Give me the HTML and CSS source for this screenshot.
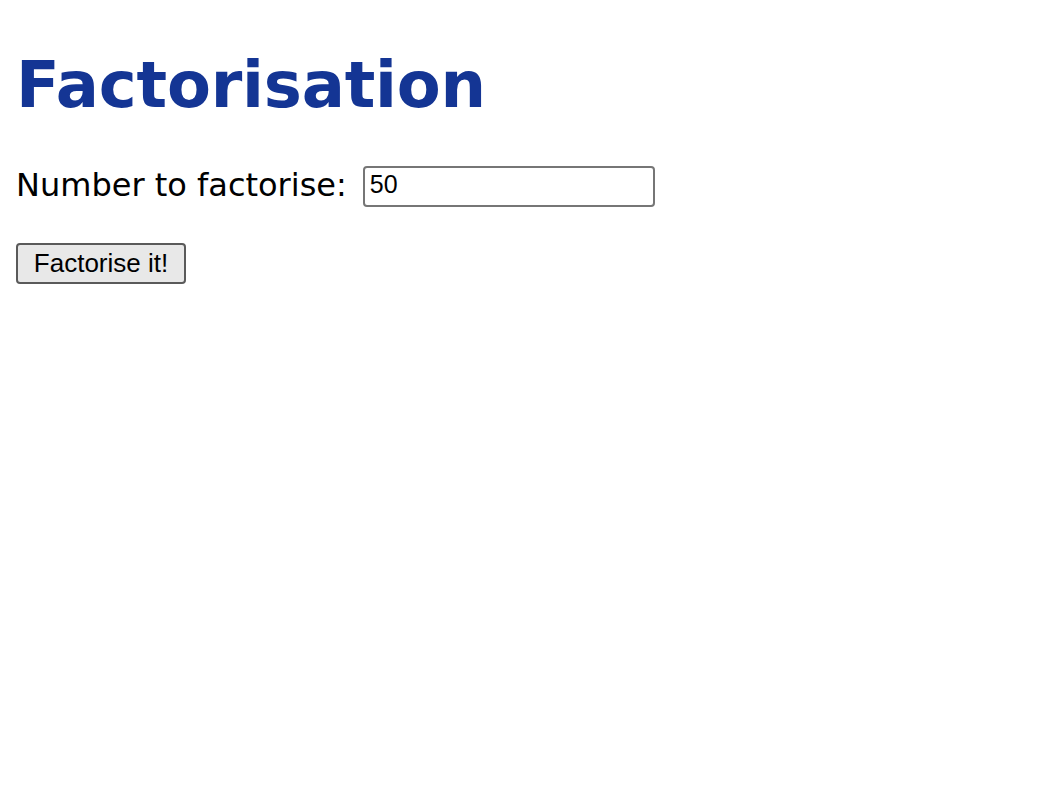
FILE: index.html
```html
<!DOCTYPE html>
<html lang="en">
<head>
<meta charset="utf-8">
<title>Factorisation</title>
<link rel="stylesheet" href="styles.css">
</head>
<body>
<main class="page">
  <h1 class="title">Factorisation</h1>
  <form class="form">
    <div class="row">
      <label class="label" for="num">Number to factorise:</label>
      <input class="field" id="num" type="text" value="50">
    </div>
    <button class="btn" type="button">Factorise it!</button>
  </form>
</main>
</body>
</html>
```
FILE: styles.css
```css
html, body {
  margin: 0;
  padding: 0;
  background: #ffffff;
}
.page {
  padding: 0 16px;
  font-family: "DejaVu Sans", Verdana, sans-serif;
  color: #000;
}
.title {
  margin: 46px 0 0;
  font-family: "DejaVu Sans", Verdana, sans-serif;
  font-weight: bold;
  font-size: 64px;
  line-height: 78px;
  letter-spacing: -0.2px;
  color: #143594;
}
.form {
  margin: 42px 0 0;
  display: flex;
  flex-direction: column;
  align-items: flex-start;
}
.row {
  display: flex;
  align-items: flex-start;
  gap: 16px;
}
.label {
  font-size: 32px;
  line-height: 38px;
}
.field {
  box-sizing: border-box;
  width: 292px;
  height: 41px;
  margin: 0;
  padding: 0 0 4px 5px;
  border: 2px solid #767676;
  border-radius: 4px;
  font-family: "Liberation Sans", Arial, sans-serif;
  font-size: 25px;
  color: #000;
  background: #fff;
  outline: none;
}
.btn {
  box-sizing: border-box;
  margin: 36px 0 0;
  width: 170px;
  height: 41px;
  padding: 0;
  border: 2px solid #5a5a5a;
  border-radius: 4px;
  background: #e8e8e8;
  font-family: "Liberation Sans", Arial, sans-serif;
  font-size: 26px;
  line-height: 29px;
  color: #000;
}
```
